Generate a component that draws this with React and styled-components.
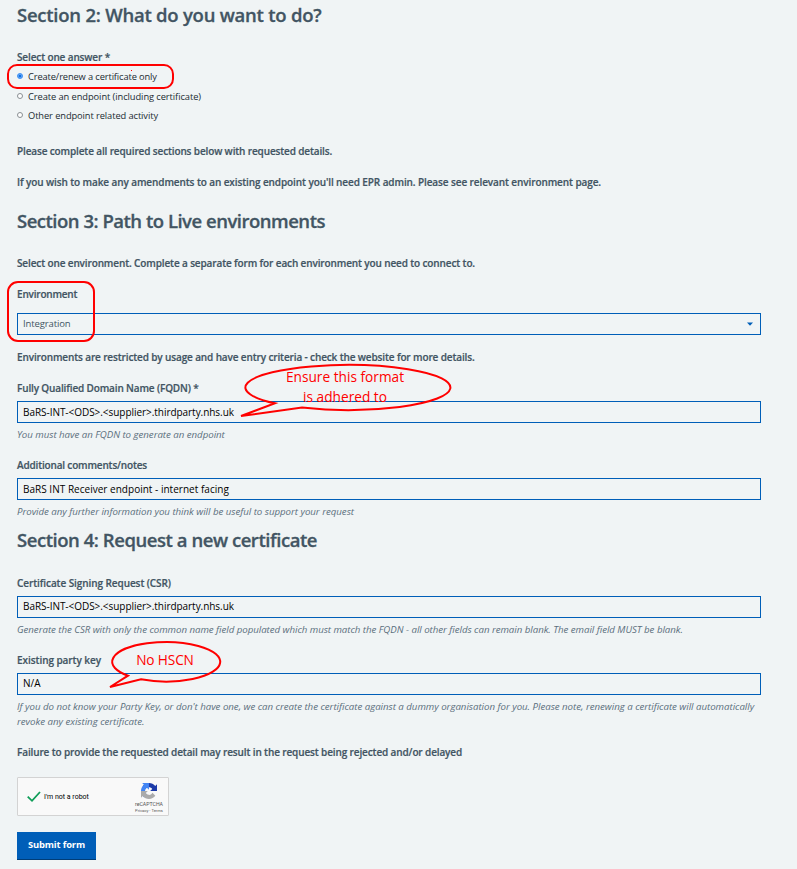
import React from 'react';
import styled, { createGlobalStyle, css } from 'styled-components';

const GlobalStyle = createGlobalStyle`
  * { box-sizing: border-box; }
  body {
    margin: 0;
    background: #f0f4f5;
    color: #425563;
    font-family: "Open Sans", "Noto Sans", sans-serif;
  }
`;

const tracked = css`
  letter-spacing: ${({ $track = 0 }) => $track}px;
`;

const Page = styled.main`
  position: relative;
  width: 797px;
  height: 869px;
  padding: 3px 36px 0 17px;
  overflow: hidden;
`;

const Heading = styled.h2`
  margin: 0;
  font-size: 18.5px;
  font-weight: 600;
  line-height: 24px;
  -webkit-text-stroke: 0.3px;
  white-space: nowrap;
  ${tracked}
`;

const Section = styled.section`
  display: flex;
  flex-direction: column;
  margin-bottom: ${({ $after = 0 }) => $after}px;
`;

const Fields = styled.div`
  display: flex;
  flex-direction: column;
  gap: 16px;
  padding-top: ${({ $top }) => $top}px;
`;

const Note = styled.p`
  margin: 0;
  font-size: 10px;
  font-weight: 600;
  line-height: 15px;
  -webkit-text-stroke: 0.2px;
  white-space: nowrap;
  ${tracked}
`;

const Field = styled.div`
  display: flex;
  flex-direction: column;
`;

const Label = styled.label`
  height: ${({ $height = 20 }) => $height}px;
  font-size: 10px;
  font-weight: 600;
  line-height: 15px;
  -webkit-text-stroke: 0.2px;
  white-space: nowrap;
  ${tracked}
`;

const boxStyle = css`
  width: 744px;
  height: 22px;
  border: 1px solid #005eb8;
  border-radius: 0;
  background: transparent;
`;

const TextInput = styled.input`
  ${boxStyle}
  padding: 0 5px ${({ $bottom = 3 }) => $bottom}px;
  color: #000;
  font: 10px "Open Sans", "Noto Sans", sans-serif;
  outline: none;
  ${tracked}
`;

const SelectBox = styled.div`
  ${boxStyle}
  display: flex;
  align-items: center;
  justify-content: space-between;
  margin-bottom: -1px;
  padding: 0 7px 0 5px;
  color: #425563;
  font-size: 9.5px;
  line-height: 20px;
  ${tracked}
`;

const Hint = styled.p`
  margin: 4px 0 0;
  color: #5b6f7d;
  font-size: 9.7px;
  font-style: italic;
  line-height: 15px;
  white-space: nowrap;
  ${tracked}
`;

const HintLine = styled.span`
  display: block;
  ${tracked}
`;

const RadioGroup = styled.div`
  display: flex;
  flex-direction: column;
  gap: 4.5px;
`;

const RadioRow = styled.label`
  display: flex;
  align-items: flex-start;
  gap: 5px;
  height: 15px;
  color: #212b32;
  font-size: 9.3px;
  line-height: 15px;
  white-space: nowrap;
  ${tracked}
`;

const Radio = styled.input`
  appearance: none;
  width: 6px;
  height: 6px;
  margin: 4px 0 0;
  border: 1px solid #8a8f93;
  border-radius: 50%;
  background: #fff;

  &:checked {
    border-color: #4a98f5;
    background: #0b6fe8;
    box-shadow: inset 0 0 0 0.5px #9cc6fa;
  }
`;

const Captcha = styled.div`
  display: flex;
  align-items: center;
  width: 152px;
  height: 39px;
  padding: 0 5px 0 9px;
  border: 1px solid #d3d3d3;
  border-radius: 1px;
  background: #f9f9f9;
  color: #000;
  font-family: Roboto, sans-serif;
`;

const CaptchaText = styled.span`
  flex: 1;
  padding-left: 3px;
  font-size: 7px;
  line-height: 10px;
  white-space: nowrap;
`;

const CaptchaBrand = styled.div`
  display: flex;
  flex-direction: column;
  align-items: center;
  width: 28px;
  padding-top: 3px;
  color: #555;
  white-space: nowrap;
`;

const BrandName = styled.span`
  margin-top: 2px;
  font-size: 5.2px;
  line-height: 7px;
`;

const BrandLinks = styled.span`
  font-size: 4.1px;
  line-height: 6px;
`;

const Submit = styled.button`
  display: block;
  width: 79px;
  height: 28px;
  margin-top: 16px;
  padding: 0 0 2px;
  border: 0;
  border-bottom: 1px solid #003d78;
  background: #005eb8;
  color: #fff;
  font: 700 9.4px "Open Sans", "Noto Sans", sans-serif;
  letter-spacing: -0.16px;
`;

const Annotations = styled.svg`
  position: absolute;
  inset: 0;
  pointer-events: none;
`;

const CalloutText = styled.div`
  position: absolute;
  left: ${({ $x }) => $x}px;
  top: ${({ $y }) => $y}px;
  width: ${({ $width }) => $width}px;
  color: #f00;
  font-size: 13.7px;
  line-height: 20px;
  text-align: center;
  white-space: nowrap;
  ${tracked}
`;

function Option({ children, track, ...rest }) {
  return (
    <RadioRow $track={track}>
      <Radio type="radio" name="activity" {...rest} />
      {children}
    </RadioRow>
  );
}

function TextField({ label, labelTrack, value, track, bottom, children }) {
  return (
    <Field>
      <Label $track={labelTrack}>{label}</Label>
      <TextInput aria-label={label} defaultValue={value} $track={track} $bottom={bottom} spellCheck={false} />
      {children}
    </Field>
  );
}

function RecaptchaLogo() {
  return (
    <svg width="16" height="16" viewBox="0 0 64 64">
      <path fill="#1c3aa9" d="M64 31.955l-.033-1.37V4.687l-7.16 7.16C50.948 4.674 42.033.093 32.05.093c-10.4 0-19.622 4.96-25.458 12.64l11.736 11.86a15.55 15.55 0 0 1 4.754-5.334c2.05-1.6 4.952-2.906 8.968-2.906.485 0 .86.057 1.135.163 4.976.393 9.288 3.14 11.828 7.124l-8.307 8.307L64 31.953" />
      <path fill="#4285f4" d="M31.862.094l-1.37.033H4.594l7.16 7.16C4.58 13.147 0 22.06 0 32.046c0 10.4 4.96 19.622 12.64 25.458L24.5 45.768a15.55 15.55 0 0 1-5.334-4.754c-1.6-2.05-2.906-4.952-2.906-8.968 0-.485.057-.86.163-1.135.393-4.976 3.14-9.288 7.124-11.828l8.307 8.307L31.86.095" />
      <path fill="#ababab" d="M.001 32.045l.033 1.37v25.898l7.16-7.16c5.86 7.173 14.774 11.754 24.76 11.754 10.4 0 19.622-4.96 25.458-12.64l-11.736-11.86a15.55 15.55 0 0 1-4.754 5.334c-2.05 1.6-4.952 2.906-8.968 2.906-.485 0-.86-.057-1.135-.163-4.976-.393-9.288-3.14-11.828-7.124l8.307-8.307L0 32.046" />
    </svg>
  );
}

export default function App() {
  return (
    <Page>
      <GlobalStyle />

      <Section $after={19}>
        <Heading $track={-0.24}>Section 2: What do you want to do?</Heading>
        <Fields $top={23}>
          <Field>
            <Label $height={19} $track={-0.13}>Select one answer *</Label>
            <RadioGroup>
              <Option defaultChecked track={-0.12}>Create/renew a certificate only</Option>
              <Option track={-0.07}>Create an endpoint (including certificate)</Option>
              <Option track={-0.09}>Other endpoint related activity</Option>
            </RadioGroup>
          </Field>
          <Fields $top={5}>
            <Note $track={-0.137}>Please complete all required sections below with requested details.</Note>
            <Note $track={-0.1}>If you wish to make any amendments to an existing endpoint you'll need EPR admin. Please see relevant environment page.</Note>
          </Fields>
        </Fields>
      </Section>

      <Section $after={9}>
        <Heading $track={-0.49}>Section 3: Path to Live environments</Heading>
        <Fields $top={23}>
          <Note $track={-0.127}>Select one environment. Complete a separate form for each environment you need to connect to.</Note>
          <Field>
            <Label $height={26} $track={-0.2}>Environment</Label>
            <SelectBox $track={-0.12}>
              Integration
              <svg width="6" height="4" viewBox="0 0 6 4">
                <path d="M0 0.4H6L3 3.8Z" fill="#005eb8" />
              </svg>
            </SelectBox>
          </Field>
          <Note $track={-0.13}>Environments are restricted by usage and have entry criteria - check the website for more details.</Note>
          <TextField label="Fully Qualified Domain Name (FQDN) *" labelTrack={-0.14} value="BaRS-INT-<ODS>.<supplier>.thirdparty.nhs.uk" track={-0.045} bottom={1}>
            <Hint $track={-0.035}>You must have an FQDN to generate an endpoint</Hint>
          </TextField>
          <TextField label="Additional comments/notes" labelTrack={-0.17} value="BaRS INT Receiver endpoint - internet facing" track={0.02} bottom={1}>
            <Hint $track={-0.03}>Provide any further information you think will be useful to support your request</Hint>
          </TextField>
        </Fields>
      </Section>

      <Section $after={17}>
        <Heading $track={-0.45}>Section 4: Request a new certificate</Heading>
        <Fields $top={24}>
          <TextField label="Certificate Signing Request (CSR)" labelTrack={-0.08} value="BaRS-INT-<ODS>.<supplier>.thirdparty.nhs.uk" track={-0.045}>
            <Hint $track={-0.04}>Generate the CSR with only the common name field populated which must match the FQDN - all other fields can remain blank. The email field MUST be blank.</Hint>
          </TextField>
          <TextField label="Existing party key" labelTrack={-0.06} value="N/A">
            <Hint>
              <HintLine $track={-0.027}>If you do not know your Party Key, or don't have one, we can create the certificate against a dummy organisation for you. Please note, renewing a certificate will automatically</HintLine>
              <HintLine $track={-0.02}>revoke any existing certificate.</HintLine>
            </Hint>
          </TextField>
          <Note $track={-0.125}>Failure to provide the requested detail may result in the request being rejected and/or delayed</Note>
        </Fields>
      </Section>

      <Captcha>
        <svg width="14" height="12" viewBox="0 0 14 12">
          <path d="M0.7 5.7L5 9.8L13 1" fill="none" stroke="#0f9d58" strokeWidth="1.8" />
        </svg>
        <CaptchaText>I'm not a robot</CaptchaText>
        <CaptchaBrand>
          <RecaptchaLogo />
          <BrandName>reCAPTCHA</BrandName>
          <BrandLinks>Privacy - Terms</BrandLinks>
        </CaptchaBrand>
      </Captcha>
      <Submit type="button">Submit form</Submit>

      <Annotations width="797" height="869" viewBox="0 0 797 869" fill="none" stroke="#f00" strokeWidth="2">
        <rect x="8" y="65" width="165" height="23" rx="9" />
        <rect x="8" y="282" width="86" height="59" rx="10" />
        <path d="M302 407.6A102.5 22.5 0 1 0 275 403.3L241 416Z" />
        <path d="M141 679.2A54 19.7 0 1 0 128 675.7L110 687Z" />
        <rect x="131" y="70" width="1" height="1" fill="#f00" stroke="none" />
      </Annotations>
      <CalloutText $x={280} $y={367} $width={130}>
        Ensure this format
        <br />
        is adhered to
      </CalloutText>
      <CalloutText $x={125} $y={650} $width={80} $track={-0.15}>No HSCN</CalloutText>
    </Page>
  );
}
